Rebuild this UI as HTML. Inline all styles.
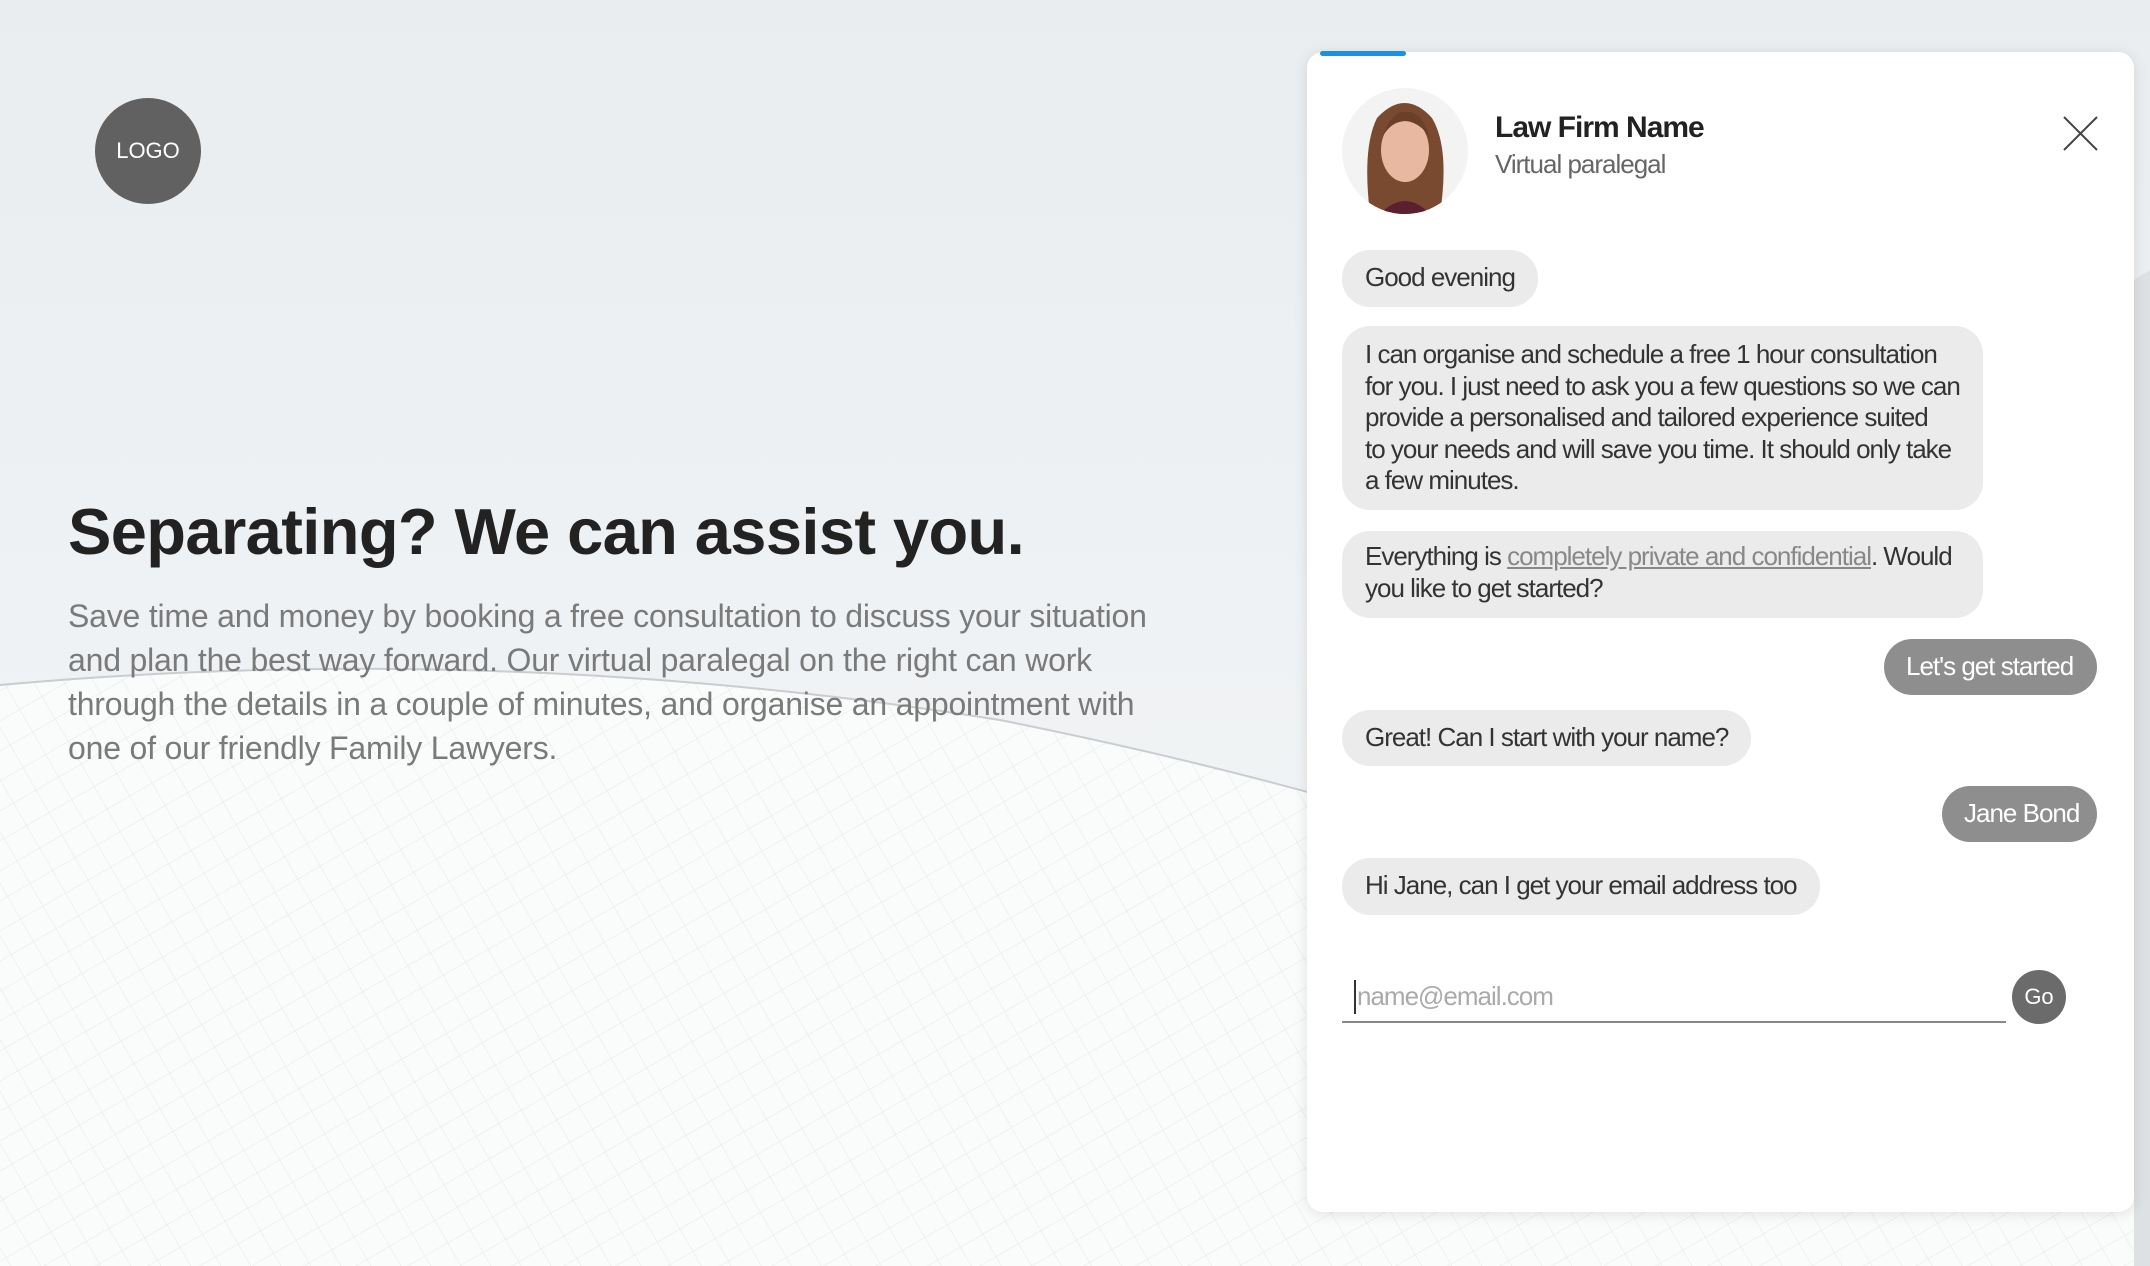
<!DOCTYPE html>
<html><head><meta charset="utf-8"><style>
*{margin:0;padding:0;box-sizing:border-box}
body{width:2150px;height:1266px;overflow:hidden;position:relative;font-family:"Liberation Sans",sans-serif;background:linear-gradient(180deg,#e9edf0 0%,#eff2f4 50%,#f4f6f7 100%)}
.bg{position:absolute;left:0;top:0}
.logo{position:absolute;left:95px;top:98px;width:106px;height:106px;border-radius:50%;background:#616161;color:#fff;font-size:22px;display:flex;align-items:center;justify-content:center}
h1{position:absolute;left:68px;top:494px;font-size:65px;font-weight:bold;color:#222;letter-spacing:-0.6px;white-space:nowrap}
.para{position:absolute;left:68px;top:594px;font-size:32px;line-height:44px;color:#7a7a7a;letter-spacing:-0.2px;white-space:nowrap}
.panel{position:absolute;left:1307px;top:52px;width:827px;height:1160px;background:#fff;border-radius:16px;box-shadow:0 2px 14px rgba(0,0,0,.1)}
.bar{position:absolute;left:1320px;top:51px;width:86px;height:5px;background:#1e90e0;border-radius:3px}
.av{position:absolute;left:1342px;top:88px;width:126px;height:126px;border-radius:50%;overflow:hidden;background:#f3f3f3}
.name{position:absolute;left:1495px;top:111px;font-size:30px;font-weight:bold;color:#222;letter-spacing:-1px}
.sub{position:absolute;left:1495px;top:149px;font-size:26px;color:#666;letter-spacing:-1px}
.b{position:absolute;background:#ebebeb;color:#333;font-size:26px;letter-spacing:-1px;line-height:31.5px;padding:12px 23px;border-radius:28px;white-space:nowrap}
.u{position:absolute;background:#8e8e8e;color:#fff;font-size:26px;letter-spacing:-1px;padding:12px 22px;border-radius:28px;white-space:nowrap}
a{color:#888;text-decoration:underline}
</style></head><body>
<svg class="bg" width="2150" height="1266" viewBox="0 0 2150 1266">
<defs><pattern id="p" width="26" height="26" patternUnits="userSpaceOnUse" patternTransform="rotate(-30)"><path d="M0 0H26M0 0V26" stroke="#dcdfe1" stroke-width="1" fill="none"/></pattern></defs>
<path d="M0 685 Q500 640 1000 720 Q1700 860 2150 1150 L2150 1266 L0 1266Z" fill="#fafbfb"/>
<path d="M0 685 Q500 640 1000 720 Q1700 860 2150 1150 L2150 1266 L0 1266Z" fill="url(#p)" opacity=".7"/>
<path d="M0 685 Q500 640 1000 720 Q1700 860 2150 1150" stroke="#c9cdd0" stroke-width="2" fill="none"/>
<path d="M2134 280 L2150 270 L2150 1266 L2134 1266Z" fill="#dde1e3"/>
</svg>
<div class="logo">LOGO</div>
<h1>Separating? We can assist you.</h1>
<div class="para">Save time and money by booking a free consultation to discuss your situation<br>and plan the best way forward. Our virtual paralegal on the right can work<br>through the details in a couple of minutes, and organise an appointment with<br>one of our friendly Family Lawyers.</div>
<div class="panel"></div>
<div class="bar"></div>
<div class="av"><svg width="126" height="126" viewBox="0 0 126 126">
<path d="M28 126 Q20 60 35 30 Q63 0 90 30 Q108 60 98 126Z" fill="#7a4a30"/>
<ellipse cx="63" cy="62" rx="24" ry="32" fill="#e8b9a0"/>
<path d="M38 126 Q63 100 88 126Z" fill="#5a2030"/>
<path d="M40 50 Q50 22 63 24 Q80 22 88 50 Q78 34 63 33 Q48 34 40 50Z" fill="#6b3f28"/>
</svg></div>
<div class="name">Law Firm Name</div>
<div class="sub">Virtual paralegal</div>
<svg style="position:absolute;left:2063px;top:116px" width="35" height="35"><path d="M1 1L34 34M34 1L1 34" stroke="#444" stroke-width="2"/></svg>
<div class="b" style="left:1342px;top:250px;height:57px">Good evening</div>
<div class="b" style="left:1342px;top:326px;width:641px;height:184px;padding-top:13px">I can organise and schedule a free 1 hour consultation<br>for you. I just need to ask you a few questions so we can<br>provide a personalised and tailored experience suited<br>to your needs and will save you time. It should only take<br>a few minutes.</div>
<div class="b" style="left:1342px;top:531px;width:641px;height:87px;padding-top:10px">Everything is <a>completely private and confidential</a>. Would<br>you like to get started?</div>
<div class="u" style="left:1884px;top:639px;height:56px;width:213px">Let's get started</div>
<div class="b" style="left:1342px;top:710px;height:56px">Great! Can I start with your name?</div>
<div class="u" style="left:1942px;top:786px;height:56px;width:155px">Jane Bond</div>
<div class="b" style="left:1342px;top:858px;height:57px">Hi Jane, can I get your email address too</div>
<div style="position:absolute;left:1342px;top:1021px;width:664px;height:2px;background:#888"></div>
<div style="position:absolute;left:1354px;top:980px;width:2px;height:34px;background:#333"></div>
<div style="position:absolute;left:1357px;top:981px;font-size:26px;color:#aaa;letter-spacing:-1px">name@email.com</div>
<div style="position:absolute;left:2012px;top:970px;width:54px;height:54px;border-radius:50%;background:#6b6b6b;color:#fff;font-size:22px;display:flex;align-items:center;justify-content:center">Go</div>
</body></html>
